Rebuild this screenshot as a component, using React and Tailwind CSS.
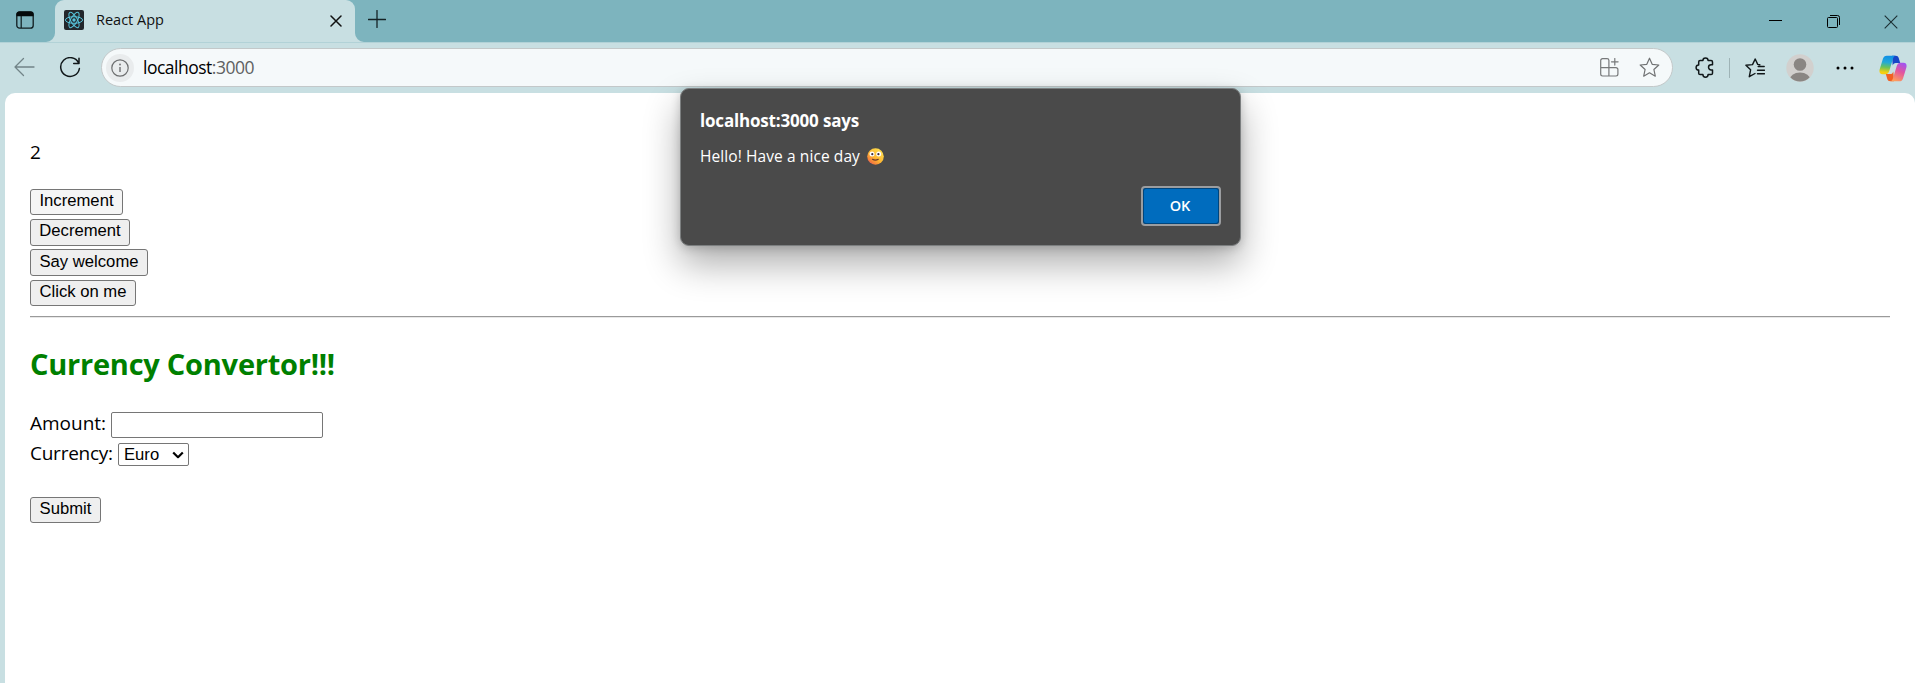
import React from "react";

const stroke = { fill: "none", strokeLinecap: "round", strokeLinejoin: "round" };

function TabActionsIcon() {
  return (
    <svg width="18" height="18" viewBox="0 0 18 18" className="block">
      <rect x="0.8" y="0.8" width="16.4" height="16.4" rx="2.8" fill="none" stroke="#101c1f" strokeWidth="1.3" />
      <path d="M0.5 5.2V3.2A2.8 2.8 0 0 1 3.3 .4h11.4a2.8 2.8 0 0 1 2.8 2.8v2z" fill="#050a0b" />
      <path d="M5.2 5v12" stroke="#101c1f" strokeWidth="1.2" />
    </svg>
  );
}

function ReactIcon() {
  return (
    <svg width="20" height="20" viewBox="0 0 20 20" className="block">
      <rect width="20" height="20" rx="2" fill="#23272c" />
      <g fill="none" stroke="#58c4dc" strokeWidth="1">
        <ellipse cx="10" cy="10" rx="8.6" ry="3.3" />
        <ellipse cx="10" cy="10" rx="8.6" ry="3.3" transform="rotate(60 10 10)" />
        <ellipse cx="10" cy="10" rx="8.6" ry="3.3" transform="rotate(120 10 10)" />
      </g>
      <circle cx="10" cy="10" r="1.7" fill="#58c4dc" />
    </svg>
  );
}

function Flare({ flip }) {
  return (
    <svg width="9" height="9" viewBox="0 0 9 9" className={flip ? "block -scale-x-100" : "block"}>
      <path d="M9 0A9 9 0 0 1 0 9H9z" fill="#c8dfe2" />
    </svg>
  );
}

function CopilotIcon() {
  return (
    <svg width="28" height="27" viewBox="0 0 28 27" className="block">
      <defs>
        <linearGradient id="cl" x1="0.4" y1="0" x2="0.3" y2="1">
          <stop offset="0" stopColor="#0f8fe6" />
          <stop offset="0.35" stopColor="#22a9d8" />
          <stop offset="0.62" stopColor="#69c35a" />
          <stop offset="0.9" stopColor="#f5cf10" />
        </linearGradient>
        <linearGradient id="cr" x1="0.7" y1="0" x2="0.3" y2="1">
          <stop offset="0" stopColor="#a355ee" />
          <stop offset="0.45" stopColor="#e2559f" />
          <stop offset="1" stopColor="#ff9f5a" />
        </linearGradient>
      </defs>
      <path d="M13 .7h3.700c1.600 0 2.500.7 3 2.200l1.500 5h-4.400c-1.800 0-2.600.9-3.100 2.600z" fill="#1746c7" />
      <path d="M15 26.300h-3.700c-1.600 0-2.500-.7-3-2.200l-1.500-5h4.400c1.800 0 2.600-.9 3.100-2.600z" fill="#f26022" />
      <path d="M7.800 .7h8.400c-1.200.5-1.800 1.600-2.300 3.200L10.500 15.300c-.8 2.700-1.700 3.900-4.200 3.900H3.500C.8 19.200-.1 17 .7 14.300L4 3.600C4.600 1.700 5.800.7 7.800.7z" fill="url(#cl)" />
      <path d="M20.200 26.300h-8.400c1.200-.5 1.800-1.600 2.300-3.200l3.400-11.400c.8-2.700 1.700-3.900 4.200-3.900h2.800c2.700 0 3.600 2.200 2.800 4.900L24 23.400c-.6 1.900-1.800 2.900-3.800 2.900z" fill="url(#cr)" />
    </svg>
  );
}

function SmileyIcon() {
  return (
    <svg width="17" height="17" viewBox="0 0 17 17" className="block">
      <defs>
        <linearGradient id="face" x1="0.85" y1="0.1" x2="0.15" y2="0.95">
          <stop offset="0" stopColor="#ffe04f" />
          <stop offset="0.55" stopColor="#fdb532" />
          <stop offset="0.85" stopColor="#f4803c" />
          <stop offset="1" stopColor="#e0506a" />
        </linearGradient>
      </defs>
      <circle cx="8.500" cy="8.500" r="8.300" fill="url(#face)" />
      <circle cx="5" cy="6.100" r="2.500" fill="#fff" />
      <circle cx="11.700" cy="6.100" r="2.500" fill="#fff" />
      <circle cx="5.300" cy="6.200" r="1.100" fill="#3b2b3c" />
      <circle cx="11.400" cy="6.200" r="1.100" fill="#3b2b3c" />
      <path d="M5.500 11.300q2.900 1.600 5.800 0" {...stroke} stroke="#6b3a2a" strokeWidth="1.100" />
    </svg>
  );
}

function TabStrip() {
  return (
    <div className="flex h-[42px] bg-[#7db4be]">
      <div className="flex w-[46px] pl-4 pt-[11px]">
        <TabActionsIcon />
      </div>
      <div className="flex w-[9px] items-end">
        <Flare />
      </div>
      <div className="flex h-[42px] w-[300px] items-start rounded-t-[9px] bg-[#c8dfe2] pl-[9px] pr-[13px] pt-[10px]">
        <ReactIcon />
        <span className="ml-[12px] whitespace-nowrap text-[14.500px] leading-[20px] text-[#111]">React App</span>
        <svg width="12" height="12" viewBox="0 0 12 12" className="ml-auto mt-[5px] block">
          <path d="M1 1l10 10M11 1L1 11" {...stroke} stroke="#111" strokeWidth="1.500" />
        </svg>
      </div>
      <div className="flex w-[9px] items-end">
        <Flare flip />
      </div>
      <svg width="18" height="18" viewBox="0 0 18 18" className="ml-1 mt-[10px] block">
        <path d="M9 .5v17M.5 9.500h17" {...stroke} stroke="#142326" strokeWidth="1.300" />
      </svg>
      <div className="ml-auto flex pr-[17px]">
        <svg width="13" height="14" viewBox="0 0 13 14" className="mr-[45px] mt-[14px] block">
          <path d="M0 6.500h13" stroke="#000" strokeWidth="1" />
        </svg>
        <svg width="13" height="14" viewBox="0 0 13 14" className="mr-[44px] mt-[15px] block">
          <rect x="0.500" y="2.500" width="10" height="10" rx="1" fill="none" stroke="#000" strokeWidth="1" />
          <path d="M3 .5h7.500a2 2 0 0 1 2 2V10" fill="none" stroke="#000" strokeWidth="1" />
        </svg>
        <svg width="14" height="14" viewBox="0 0 14 14" className="mt-[15px] block">
          <path d="M.7 .7l12.600 12.600M13.300 .7L.7 13.300" stroke="#1c2f33" strokeWidth="1.100" />
        </svg>
      </div>
    </div>
  );
}

function Toolbar() {
  return (
    <div className="flex h-[51px] items-start border-t border-[#b2d2d7] bg-[#c8dfe2] pt-[5px]">
      <svg width="21" height="20" viewBox="0 0 21 20" className="ml-[14px] mt-[9px] block">
        <path d="M9.500 1.500L1 10l8.500 8.500M1 10h19" {...stroke} stroke="#728488" strokeWidth="1.300" />
      </svg>
      <svg width="22" height="22" viewBox="0 0 22 22" className="ml-[24px] mt-[9px] block">
        <path d="M19.600 6A9.400 9.400 0 1 0 20.400 11.500M20 1.200v5.300h-5.300" {...stroke} stroke="#101719" strokeWidth="1.500" />
      </svg>
      <div className="ml-[20px] flex h-[39px] w-[1572px] items-center rounded-full border border-[#c3c8c9] bg-[#f5f9fa] pl-[4px] pr-[12px]">
        <div className="flex size-[28px] items-center justify-center rounded-full bg-[#e9eced]">
          <svg width="18" height="18" viewBox="0 0 18 18" className="block">
            <circle cx="9" cy="9" r="8.200" fill="none" stroke="#6d6f70" strokeWidth="1.200" />
            <path d="M9 8v5" stroke="#6d6f70" strokeWidth="1.400" />
            <circle cx="9" cy="5.500" r="0.900" fill="#6d6f70" />
          </svg>
        </div>
        <span className="-mt-px ml-[9px] whitespace-nowrap text-[17.500px] leading-[24px] tracking-[-0.500px] text-black">
          localhost<span className="text-[#5f6162]">:3000</span>
        </span>
        <svg width="19" height="19" viewBox="0 0 19 19" className="ml-auto block">
          <path d="M8.900 18V2.400A1.800 1.800 0 0 0 7.100 .7H2.500A1.800 1.800 0 0 0 .7 2.500v13.600A1.900 1.900 0 0 0 2.600 18H16a1.900 1.900 0 0 0 1.900-1.900v-4.500a1.900 1.900 0 0 0-1.900-1.900H.7M14.800 .5v6.600M11.500 3.800h6.600" {...stroke} stroke="#77797a" strokeWidth="1.200" />
        </svg>
        <svg width="21" height="21" viewBox="0 0 21 21" className="ml-[20px] block">
          <path d="M10.500 1.200l2.700 6.100 6.600.7-4.900 4.500 1.400 6.700-5.800-3.400-5.800 3.400 1.400-6.700L1.200 8l6.600-.7z" {...stroke} stroke="#707273" strokeWidth="1.200" />
        </svg>
      </div>
      <svg width="19" height="21" viewBox="0 0 19 21" className="ml-[22px] mt-[9px] block">
        <path d="M17.500 7.800V4.900a1.400 1.400 0 0 0-1.400-1.400H13.100a2.600 2.600 0 0 0-5.200 0H5.100a1.400 1.400 0 0 0-1.400 1.400v3a2.600 2.600 0 0 0 0 5.200v3.100a1.400 1.400 0 0 0 1.400 1.400h2.800a2.600 2.600 0 0 0 5.200 0h3a1.400 1.400 0 0 0 1.400-1.400v-3.300h-1.400a2.500 2.500 0 0 1 0-5.100z" {...stroke} stroke="#101719" strokeWidth="1.500" />
      </svg>
      <div className="ml-[15px] mt-[10px] h-5 w-px bg-[#9eb3b6]" />
      <svg width="20" height="20" viewBox="0 0 20 20" className="ml-[15px] mt-[10px] block">
        <path d="M14.800 6.800L12.700 6.400 10.200 1 7.500 6.600 .9 7.200l4.700 4.600-1.300 6.900 5.700-3.200M13.200 8.500h6M12.500 12.200h7M12.500 15.700h7" {...stroke} stroke="#101719" strokeWidth="1.400" />
      </svg>
      <svg width="28" height="28" viewBox="0 0 28 28" className="ml-[21px] mt-[6px] block">
        <defs>
          <clipPath id="avatar"><circle cx="14" cy="14" r="13.500" /></clipPath>
        </defs>
        <circle cx="14" cy="14" r="13.700" fill="#d2d0ce" />
        <g fill="#8a8683" clipPath="url(#avatar)">
          <circle cx="14" cy="10.500" r="6.300" />
          <ellipse cx="14" cy="26.300" rx="10.500" ry="7.800" />
        </g>
      </svg>
      <svg width="18" height="4" viewBox="0 0 18 4" className="ml-[22px] mt-[18px] block">
        <circle cx="2" cy="2" r="1.500" />
        <circle cx="9" cy="2" r="1.500" />
        <circle cx="16" cy="2" r="1.500" />
      </svg>
      <div className="ml-[25px] mt-[7px]">
        <CopilotIcon />
      </div>
    </div>
  );
}

const buttonBase = "block rounded-[3px] border border-[#767676] font-['Liberation_Sans',sans-serif] text-[16.667px] text-black whitespace-nowrap";

function Page() {
  return (
    <div className="h-[590px] bg-[#c8dfe2] pl-[5px]">
      <main className="h-[590px] rounded-t-[10px] bg-white pl-[25px] pr-[25px] pt-[46px] text-[19px] text-black">
        <p className="h-[50px] leading-[27px]">2</p>
        <button className={buttonBase + " h-[26px] w-[93px] bg-[#f5f5f5] pb-[2px] leading-[22px]"}>Increment</button>
        <button className={buttonBase + " mt-1 h-[27px] w-[100px] bg-[#efefef] pb-[3px] leading-[22px]"}>Decrement</button>
        <button className={buttonBase + " mt-[3px] h-[27px] w-[118px] bg-[#efefef] pb-px leading-[24px]"}>Say welcome</button>
        <button className={buttonBase + " mt-1 h-[26px] w-[106px] bg-[#efefef] pb-[2px] leading-[22px]"}>Click on me</button>
        <hr className="mt-[10px] h-[2px] border-0 border-t border-[#9a9a9a] bg-[#e8e8e8]" />
        <h2 className="mt-[28px] h-[66px] whitespace-nowrap text-[29px] font-bold leading-[36px] tracking-[-0.240px] text-[#008000]">Currency Convertor!!!</h2>
        <div className="flex h-[31px] items-start">
          <label className="w-[81px] whitespace-nowrap leading-[23px]">Amount:</label>
          <input className="h-[26px] w-[212px] rounded-[2px] border border-[#767676] bg-white" />
        </div>
        <div className="flex h-[54px] items-start">
          <label className="w-[88px] whitespace-nowrap leading-[21px] tracking-[-0.250px]">Currency:</label>
          <div className="flex h-[23px] w-[71px] items-center rounded-[2px] border border-[#767676] pl-[5px] pr-[4px] font-['Liberation_Sans',sans-serif] text-[16.667px] leading-[21px]">
            <span className="-mt-px">Euro</span>
            <svg width="12" height="8" viewBox="0 0 12 8" className="ml-auto block">
              <path d="M1.200 1.500L6 6.200l4.800-4.700" {...stroke} strokeLinecap="butt" stroke="#000" strokeWidth="2.200" />
            </svg>
          </div>
        </div>
        <button className={buttonBase + " h-[26px] w-[71px] bg-[#efefef] pb-[2px] leading-[22px]"}>Submit</button>
      </main>
    </div>
  );
}

function AlertDialog() {
  return (
    <div role="alertdialog" className="absolute left-[680px] top-[88px] flex h-[158px] w-[561px] flex-col rounded-[9px] border border-[#7c7f80] bg-[#4a4a4a] pl-[19px] pr-[19px] pt-[19px] text-white shadow-[0_18px_36px_rgba(0,0,0,0.32),0_2px_10px_rgba(0,0,0,0.18)]">
      <h1 className="h-[36px] whitespace-nowrap text-[17px] font-bold leading-[25px] tracking-[-0.180px]">localhost:3000 says</h1>
      <div className="flex h-[42px] items-start">
        <p className="w-[167px] whitespace-nowrap text-[15.500px] leading-[24px] tracking-[0.090px]">Hello! Have a nice day</p>
        <div className="mt-[4px]"><SmileyIcon /></div>
      </div>
      <div className="flex justify-end">
        <button className="flex h-[40px] w-[80px] items-center justify-center rounded-[4px] border-2 border-[#9b9da0] bg-[#00457c] p-px">
          <span className="h-[34px] w-[74px] rounded-[2px] bg-[#006cbe] pr-[2px] text-center text-[14.500px] font-semibold leading-[33px]">OK</span>
        </button>
      </div>
    </div>
  );
}

export default function App() {
  return (
    <div className="relative h-[683px] w-[1915px] overflow-hidden font-['Open_Sans','Noto_Sans',sans-serif]">
      <TabStrip />
      <Toolbar />
      <Page />
      <AlertDialog />
    </div>
  );
}
